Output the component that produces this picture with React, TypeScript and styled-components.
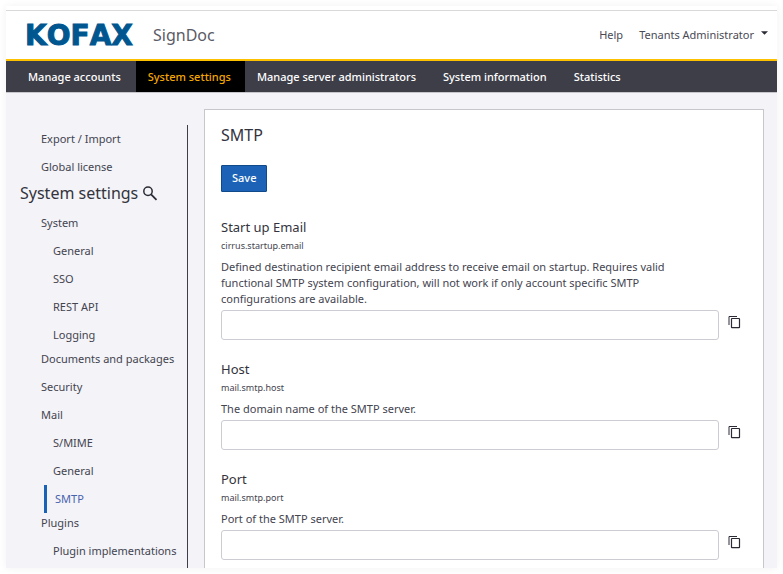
import React from 'react';
import styled, { createGlobalStyle, css } from 'styled-components';

const GlobalStyle = createGlobalStyle`
  *, *::before, *::after { box-sizing: border-box; }
  body {
    margin: 0;
    background: #fff;
    color: #44444f;
    font: 11px/16px "Noto Sans", sans-serif;
  }
  h1, h2, h3, p, ul { margin: 0; padding: 0; font-weight: 400; }
  ul { list-style: none; }
  a { color: inherit; text-decoration: none; }
  button, input { font: inherit; }
`;

const Page = styled.div`
  display: flex;
  height: 100vh;
  min-width: 700px;
  padding: 6px;
`;

const Shell = styled.div`
  flex: 1;
  display: flex;
  flex-direction: column;
  overflow: hidden;
  padding-top: 4px;
  background: #fff;
  box-shadow: 0 0 8px rgba(0, 0, 0, 0.06);
`;

const Header = styled.header`
  flex: none;
  display: flex;
  align-items: center;
  height: 51px;
  padding: 0 9px 0 20px;
  border-top: 1px solid #d9d9d9;
  border-bottom: 2px solid #fdc100;
`;

const Logo = styled.svg`
  display: block;
  width: 114px;
  height: 32px;
  fill: #00568f;
  stroke: #00568f;
  font-kerning: none;
`;

const Product = styled.span`
  flex: 1;
  margin-left: 13px;
  font-size: 16px;
  line-height: 24px;
  color: #5b5b66;
`;

const HeaderLink = styled.a`
  margin-right: 16px;
  color: #4a4a55;
`;

const UserButton = styled.button`
  display: flex;
  align-items: center;
  gap: 7px;
  padding: 0;
  border: 0;
  background: none;
  color: #4a4a55;
  cursor: pointer;
`;

const Caret = styled.svg`
  width: 7px;
  height: 4px;
  margin-bottom: 4px;
  fill: #2b2b36;
`;

const Nav = styled.nav`
  flex: none;
  display: flex;
  height: 32px;
  padding-left: 10px;
  background: #3e3e48;
  border-bottom: 1px solid #c6c6cc;
`;

const NavLink = styled.a<{ $active?: boolean }>`
  display: flex;
  align-items: center;
  padding: 0 12px;
  margin-right: 3px;
  font-weight: 500;
  color: #fff;
  ${p =>
    p.$active &&
    css`
      padding-right: 14px;
      margin-right: 0;
      color: #f5a800;
      background: #000;
    `}
`;

const Body = styled.div`
  flex: 1;
  min-height: 0;
  display: flex;
  overflow: hidden;
  background: #f3f3f8;
`;

const Sidebar = styled.aside`
  flex: none;
  width: 182px;
  margin-top: 32px;
  padding-top: 4px;
  border-right: 1px solid #3e3e48;
`;

const SideHeading = styled.h2`
  display: flex;
  align-items: center;
  gap: 4px;
  height: 32px;
  margin: -8px 0 4px;
  padding-left: 14px;
  font-size: 16px;
  color: #33333d;
`;

const IconButton = styled.button`
  display: flex;
  padding: 0;
  border: 0;
  background: none;
  color: #2b2b36;
  cursor: pointer;
`;

const SideItem = styled.li`
  padding-bottom: 8px;
  &:has(ul) { padding-bottom: 0; }
`;

const SideLink = styled.a`
  display: block;
  padding-left: 35px;
  line-height: 20px;
  white-space: nowrap;
`;

const SubList = styled.ul`
  padding: 4px 0 0 38px;
`;

const SubLink = styled.a<{ $active?: boolean }>`
  display: block;
  padding-left: 9px;
  line-height: 28px;
  white-space: nowrap;
  ${p =>
    p.$active &&
    css`
      padding-left: 8px;
      border-left: 3px solid #1a62b5;
      color: #4763ad;
    `}
`;

const Panel = styled.main`
  flex: 1;
  min-width: 0;
  margin: 16px 13px 0 16px;
  padding: 15px 16px 0;
  overflow: hidden;
  background: #fff;
  border: 1px solid #c6c6cc;
  border-bottom: 0;
`;

const Title = styled.h1`
  margin-bottom: 20px;
  font-size: 16px;
  line-height: 20px;
  color: #33333d;
`;

const SaveButton = styled.button`
  display: block;
  height: 27px;
  margin-bottom: 26px;
  padding: 0 10px 2px;
  border: 1px solid #114a8b;
  border-radius: 1px;
  background: #1c63b7;
  color: #fff;
  font-weight: 500;
  cursor: pointer;
`;

const Field = styled.section`
  margin-bottom: 20px;
`;

const FieldLabel = styled.label`
  display: block;
  font-size: 13px;
  line-height: 18px;
  color: #33333d;
`;

const FieldKey = styled.p`
  margin: 3px 0 6px;
  font-size: 9px;
  line-height: 14px;
`;

const Description = styled.p`
  max-width: 480px;
  margin-bottom: 3px;
`;

const InputRow = styled.div`
  display: flex;
  gap: 8px;
  padding-right: 5px;
`;

const TextInput = styled.input`
  flex: 1;
  min-width: 0;
  height: 30px;
  padding: 0 8px;
  border: 1px solid #cbcdd3;
  border-radius: 3px;
  background: #fff;
  color: inherit;
`;

const CopyButton = styled(IconButton)`
  align-self: flex-start;
  margin-top: 4px;
`;

const CopyIcon = () => (
  <svg width="15" height="16" viewBox="0 0 15 16" fill="none" stroke="currentColor" aria-hidden="true">
    <path d="M2 11V2.5H10" />
    <rect x="4.5" y="4.5" width="8" height="9.2" rx="0.5" strokeWidth="1.2" />
  </svg>
);

const SearchIcon = () => (
  <svg width="18" height="18" viewBox="0 0 18 18" fill="none" stroke="currentColor" strokeWidth="1.5" aria-hidden="true">
    <circle cx="6" cy="7.3" r="4.2" />
    <path d="M9.1 10.4L14.5 15.8" strokeWidth="1.8" />
  </svg>
);

type Entry = { label: string; children?: string[] };

const topEntries: Entry[] = [{ label: 'Export / Import' }, { label: 'Global license' }];

const settingEntries: Entry[] = [
  { label: 'System', children: ['General', 'SSO', 'REST API', 'Logging'] },
  { label: 'Documents and packages' },
  { label: 'Security' },
  { label: 'Mail', children: ['S/MIME', 'General', 'SMTP'] },
  { label: 'Plugins', children: ['Plugin implementations'] },
];

const tabs = ['Manage accounts', 'System settings', 'Manage server administrators', 'System information', 'Statistics'];

const fields = [
  {
    label: 'Start up Email',
    name: 'cirrus.startup.email',
    text: 'Defined destination recipient email address to receive email on startup. Requires valid functional SMTP system configuration, will not work if only account specific SMTP configurations are available.',
  },
  { label: 'Host', name: 'mail.smtp.host', text: 'The domain name of the SMTP server.' },
  { label: 'Port', name: 'mail.smtp.port', text: 'Port of the SMTP server.' },
];

const SideList = ({ entries }: { entries: Entry[] }) => (
  <ul>
    {entries.map(entry => (
      <SideItem key={entry.label}>
        <SideLink href="#">{entry.label}</SideLink>
        {entry.children && (
          <SubList>
            {entry.children.map(child => (
              <li key={child}>
                <SubLink href="#" $active={child === 'SMTP'}>{child}</SubLink>
              </li>
            ))}
          </SubList>
        )}
      </SideItem>
    ))}
  </ul>
);

export default function App() {
  return (
    <Page>
      <GlobalStyle />
      <Shell>
        <Header>
          <Logo viewBox="0 0 114 32" role="img" aria-label="KOFAX">
            <text x="-1" y="26" fontFamily="DejaVu Sans, sans-serif" fontWeight="700" fontSize="28" strokeWidth="1">KOFAX</text>
          </Logo>
          <Product>SignDoc</Product>
          <HeaderLink href="#">Help</HeaderLink>
          <UserButton type="button">
            Tenants Administrator
            <Caret viewBox="0 0 8 4" aria-hidden="true"><path d="M0 0H8L4 4Z" /></Caret>
          </UserButton>
        </Header>
        <Nav>
          {tabs.map(tab => (
            <NavLink key={tab} href="#" $active={tab === 'System settings'}>{tab}</NavLink>
          ))}
        </Nav>
        <Body>
          <Sidebar>
            <SideList entries={topEntries} />
            <SideHeading>
              System settings
              <IconButton type="button" aria-label="Search"><SearchIcon /></IconButton>
            </SideHeading>
            <SideList entries={settingEntries} />
          </Sidebar>
          <Panel>
            <Title>SMTP</Title>
            <SaveButton type="button">Save</SaveButton>
            {fields.map(field => (
              <Field key={field.name}>
                <FieldLabel htmlFor={field.name}>{field.label}</FieldLabel>
                <FieldKey>{field.name}</FieldKey>
                <Description>{field.text}</Description>
                <InputRow>
                  <TextInput id={field.name} type="text" />
                  <CopyButton type="button" aria-label={`Copy ${field.label}`}><CopyIcon /></CopyButton>
                </InputRow>
              </Field>
            ))}
          </Panel>
        </Body>
      </Shell>
    </Page>
  );
}
